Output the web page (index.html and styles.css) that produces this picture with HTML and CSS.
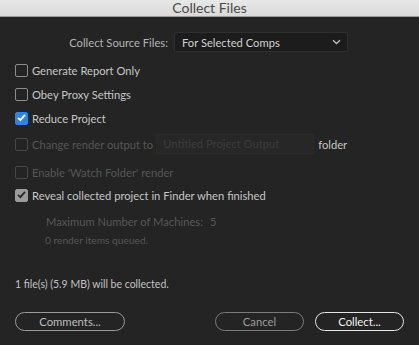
FILE: index.html
```html
<!DOCTYPE html>
<html>
<head>
<meta charset="utf-8">
<link rel="stylesheet" href="styles.css">
</head>
<body>
<div class="dialog">
  <div class="titlebar">Collect Files</div>
  <div class="content">
    <div class="source-row">
      <span class="source-label">Collect Source Files:</span>
      <div class="select">
        <span>For Selected Comps</span>
        <svg class="chev" width="9" height="6" viewBox="0 0 9 6"><path d="M1 1.2 L4.5 4.5 L8 1.2" fill="none" stroke="#bdbdbd" stroke-width="1.4"/></svg>
      </div>
    </div>
    <div class="row r1"><span class="box"></span><span class="label">Generate Report Only</span></div>
    <div class="row r2"><span class="box"></span><span class="label">Obey Proxy Settings</span></div>
    <div class="row r3"><span class="box checked"><svg width="13" height="13" viewBox="0 0 13 13"><path d="M3 6.8 L5.4 9.2 L10 3.8" fill="none" stroke="#fff" stroke-width="1.8"/></svg></span><span class="label">Reduce Project</span></div>
    <div class="row r4 disabled"><span class="box"></span><span class="label">Change render output to</span><span class="field">Untitled Project Output</span><span class="folder">folder</span></div>
    <div class="row r5 disabled"><span class="box"></span><span class="label">Enable 'Watch Folder' render</span></div>
    <div class="row r6"><span class="box checked-gray"><svg width="13" height="13" viewBox="0 0 13 13"><path d="M3 6.8 L5.4 9.2 L10 3.8" fill="none" stroke="#262626" stroke-width="1.8"/></svg></span><span class="label">Reveal collected project in Finder when finished</span></div>
    <div class="machines"><span>Maximum Number of Machines:</span><span class="num">5</span></div>
    <div class="queued">0 render items queued.</div>
    <div class="summary">1 file(s) (5.9 MB) will be collected.</div>
    <div class="buttons">
      <button class="btn comments">Comments...</button>
      <div class="spacer"></div>
      <button class="btn cancel">Cancel</button>
      <button class="btn collect">Collect...</button>
    </div>
  </div>
</div>
</body>
</html>
```
FILE: styles.css
```css
html, body {
  margin: 0;
  padding: 0;
  background: #242424;
}
.dialog {
  width: 419px;
  height: 345px;
  background: #242424;
  font-family: Lato, "Open Sans", sans-serif;
  font-size: 11.2px;
  color: #c6c6c6;
  overflow: hidden;
}
.titlebar {
  height: 16px;
  background: linear-gradient(#e8e8e8, #d9d9d9);
  border-bottom: 1px solid #9a9a9a;
  color: #4b4b4b;
  font-size: 14px;
  line-height: 16px;
  text-align: center;
}
.content {
  padding: 0 15px;
}
.source-row {
  display: flex;
  align-items: center;
  margin-top: 15px;
  height: 20px;
}
.source-label {
  width: 153px;
  text-align: right;
  color: #b4b4b4;
}
.select {
  margin-left: 6px;
  width: 174px;
  height: 20px;
  box-sizing: border-box;
  background: #1c1c1c;
  border: 1px solid #2f2f2f;
  border-radius: 2px;
  display: flex;
  align-items: center;
  justify-content: space-between;
  padding: 0 6px 0 7px;
  color: #d0d0d0;
}
.chev {
  display: block;
}
.row {
  display: flex;
  align-items: center;
  height: 22px;
}
.r1 { margin-top: 7px; }
.r2 { margin-top: 2px; }
.r3 { margin-top: 2px; }
.r4 { margin-top: 4px; }
.r5 { margin-top: 6px; }
.r6 { margin-top: 1px; }
.box {
  width: 13px;
  height: 13px;
  box-sizing: border-box;
  border: 1.5px solid #8c8c8c;
  border-radius: 2px;
  margin-right: 4px;
  flex: none;
  display: flex;
}
.box svg { display: block; margin: -1.5px; }
.checked {
  background: #2d84e6;
  border-color: #2d84e6;
}
.checked-gray {
  background: #9c9c9c;
  border-color: #9c9c9c;
}
.checked-gray svg path { stroke: #2a2a2a; }
.disabled { color: #565656; }
.disabled .box { border-color: #474747; }
.field {
  margin-left: 3px;
  width: 158px;
  height: 20px;
  box-sizing: border-box;
  background: #272727;
  border: 1px solid #2a2a2a;
  color: #3c3c3c;
  padding-left: 6px;
  line-height: 18px;
}
.folder {
  margin-left: 4px;
  color: #c4c4c4;
}
.machines {
  margin-top: 8px;
  margin-left: 31px;
  height: 16px;
  line-height: 16px;
  color: #575757;
}
.machines .num { margin-left: 7px; }
.queued {
  margin-left: 30px;
  margin-top: 2px;
  height: 16px;
  line-height: 16px;
  font-size: 10.2px;
  color: #575757;
}
.summary {
  margin-top: 28px;
  height: 16px;
  line-height: 16px;
  font-size: 10.5px;
  color: #c2c2c2;
}
.buttons {
  margin-top: 20px;
  display: flex;
  align-items: center;
}
.spacer { flex: 1; }
.btn {
  height: 19px;
  box-sizing: border-box;
  border-radius: 10px;
  background: transparent;
  font-family: Lato, "Open Sans", sans-serif;
  font-size: 11.3px;
  padding: 0;
  line-height: 15px;
}
.comments {
  width: 110px;
  border: 1.5px solid #9a9a9a;
  color: #bdbdbd;
}
.cancel {
  width: 89px;
  border: 1.5px solid #7a7a7a;
  color: #9c9c9c;
}
.collect {
  margin-left: 11px;
  width: 89px;
  border: 1.5px solid #e6e6e6;
  color: #f2f2f2;
}
```
